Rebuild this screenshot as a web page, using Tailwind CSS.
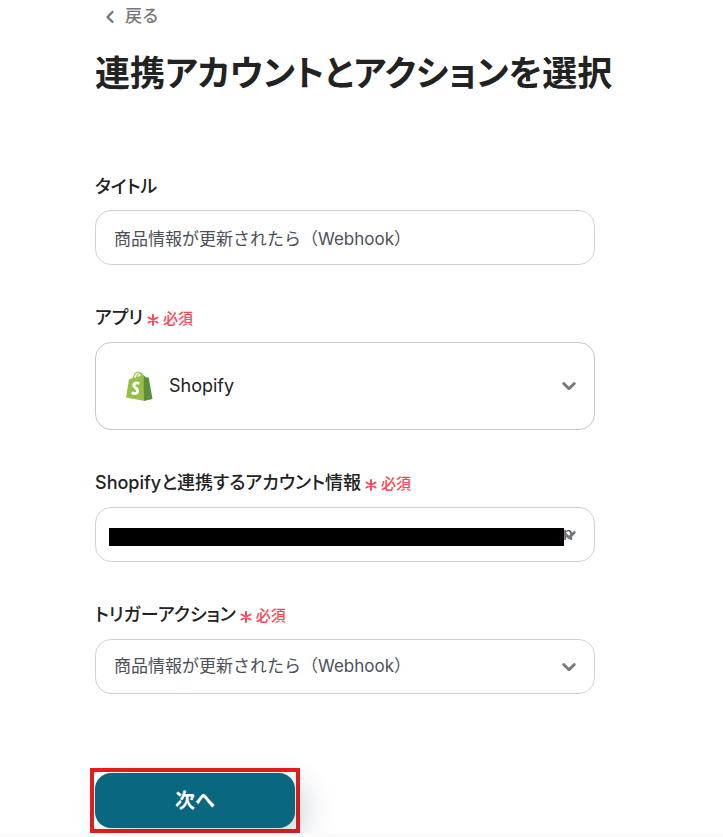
<!DOCTYPE html>
<html lang="ja">
<head>
    <meta charset="UTF-8">
    <meta name="viewport" content="width=device-width, initial-scale=1.0">
    <title>連携アカウントとアクションを選択</title>
    <script src="https://cdn.jsdelivr.net/npm/@tailwindcss/browser@4"></script>
</head>
<body class="bg-[#fbfbfb] text-[#222] font-['Inter','Noto_Sans_CJK_JP',sans-serif] overflow-x-hidden">
<main class="bg-white px-[95px] pt-[5px] overflow-hidden">
    <!-- 戻る -->
    <a href="#" class="flex w-fit items-center gap-2 pl-2 h-6 text-[17px] font-medium text-[#777]">
        <svg class="w-[14px] h-[14px]" viewBox="0 0 14 14" fill="none" stroke="currentColor" stroke-width="2.400" stroke-linecap="round" stroke-linejoin="round" aria-hidden="true"><path d="M9.500 2 4.500 7 9.500 12"/></svg>
        戻る
    </a>

    <h1 class="mt-[18px] h-[52px] text-[35px] leading-[52px] font-bold whitespace-nowrap [font-feature-settings:'palt']">連携アカウントとアクションを選択</h1>

    <form class="mt-[75px] max-w-[500px]">
        <div class="flex flex-col gap-[41px]">
            <!-- タイトル -->
            <div class="flex flex-col gap-3">
                <label for="title" class="h-6 text-[18px] leading-[26px] font-medium [font-feature-settings:'palt']">タイトル</label>
                <input type="text" id="title" name="title" value="商品情報が更新されたら（Webhook）" class="w-full h-[55px] px-[18px] border border-[#cdd2da] rounded-2xl text-[17px] text-[#4b5058]">
            </div>

            <!-- アプリ -->
            <div class="flex flex-col gap-3">
                <label for="app" class="flex items-center gap-1 h-6 text-[18px] leading-6 font-medium [font-feature-settings:'palt']">
                    アプリ
                    <span class="flex items-center gap-1 pt-[2px] text-[15px] text-[#ff4757]">
                        <svg class="w-3 h-3 mt-[2px]" viewBox="0 0 12 12" stroke="currentColor" stroke-width="2" stroke-linecap="round" aria-hidden="true"><path d="M6 1v10M1.500 3.500l9 5M10.500 3.500l-9 5"/></svg>
                        必須
                    </span>
                </label>
                <div class="relative">
                    <select id="app" name="app" class="appearance-none w-full h-[88px] pl-[73px] pr-12 pb-[2px] border border-[#c8c8c8] rounded-2xl text-[18px]">
                        <option>Shopify</option>
                    </select>
                    <svg class="absolute left-[31px] top-[29px] w-[27px] h-[30px] pointer-events-none" viewBox="0 0 27 30" aria-hidden="true">
                        <path d="M7 8C8 3.500 10.500 1 12.500 1c2 0 3 2.500 3 6M10.500 7c.5-3 2.500-5 4-5 1.500 0 2.200 2 2.200 4.500" fill="none" stroke="#95bf47" stroke-width="1.200"/>
                        <path d="M3 8.300 17.500 4l1.500 26L0 26.500z" fill="#95bf47"/>
                        <path d="M17.500 4l2.200 2.200 3 .3L26.500 28l-8.500 2z" fill="#5e8e3e"/>
                        <path d="M13.200 12.500c-4.400-2-6.700 1.500-4.300 3.700 1.600 1.400 3.300 2.200 2.700 4.500-.6 2.200-3.200 2.500-5.800.8" fill="none" stroke="#fff" stroke-width="2.900"/>
                    </svg>
                    <svg class="absolute right-[18px] top-[36px] w-4 h-4 text-[#777] pointer-events-none" viewBox="0 0 16 16" fill="none" stroke="currentColor" stroke-width="2.800" stroke-linecap="round" stroke-linejoin="round" aria-hidden="true"><path d="M2.700 5.500 8 10.800l5.300-5.300"/></svg>
                </div>
            </div>

            <!-- アカウント情報 -->
            <div class="flex flex-col gap-3">
                <label for="account" class="flex items-center gap-1 h-6 text-[18px] leading-6 font-medium [font-feature-settings:'palt']">
                    Shopifyと連携するアカウント情報
                    <span class="flex items-center gap-1 pt-[2px] text-[15px] text-[#ff4757]">
                        <svg class="w-3 h-3 mt-[2px]" viewBox="0 0 12 12" stroke="currentColor" stroke-width="2" stroke-linecap="round" aria-hidden="true"><path d="M6 1v10M1.500 3.500l9 5M10.500 3.500l-9 5"/></svg>
                        必須
                    </span>
                </label>
                <div class="relative">
                    <select id="account" name="account" class="appearance-none w-full h-[55px] pl-[18px] pr-[21px] border border-[#cdd2da] rounded-2xl text-[17px] text-[#4b5058] text-right">
                        <option>n</option>
                    </select>
                    <svg class="absolute right-[18px] top-5 w-4 h-4 text-[#777] pointer-events-none" viewBox="0 0 16 16" fill="none" stroke="currentColor" stroke-width="2.800" stroke-linecap="round" stroke-linejoin="round" aria-hidden="true"><path d="M2.700 5.500 8 10.800l5.300-5.300"/></svg>
                    <!-- 黒塗り -->
                    <span class="absolute left-[14px] right-[31px] top-[21px] h-[18px] bg-black pointer-events-none"></span>
                </div>
            </div>

            <!-- トリガーアクション -->
            <div class="flex flex-col gap-3">
                <label for="trigger" class="flex items-center gap-1 h-6 text-[18px] leading-6 font-medium [font-feature-settings:'palt']">
                    トリガーアクション
                    <span class="flex items-center gap-1 pt-[2px] text-[15px] text-[#ff4757]">
                        <svg class="w-3 h-3 mt-[2px]" viewBox="0 0 12 12" stroke="currentColor" stroke-width="2" stroke-linecap="round" aria-hidden="true"><path d="M6 1v10M1.500 3.500l9 5M10.500 3.500l-9 5"/></svg>
                        必須
                    </span>
                </label>
                <div class="relative">
                    <select id="trigger" name="trigger" class="appearance-none w-full h-[55px] pl-[18px] pr-12 border border-[#cdd2da] rounded-2xl text-[17px] text-[#4b5058]">
                        <option>商品情報が更新されたら（Webhook）</option>
                    </select>
                    <svg class="absolute right-[18px] top-5 w-4 h-4 text-[#777] pointer-events-none" viewBox="0 0 16 16" fill="none" stroke="currentColor" stroke-width="2.800" stroke-linecap="round" stroke-linejoin="round" aria-hidden="true"><path d="M2.700 5.500 8 10.800l5.300-5.300"/></svg>
                </div>
            </div>
        </div>

        <!-- 次へ -->
        <div class="mt-[74px] -ml-[5px] w-fit border-4 border-[#e91c1c] p-px">
            <button type="submit" class="block w-[200px] h-[55px] rounded-2xl bg-[#0a6780] text-[20px] font-bold text-white shadow-[10px_10px_30px_rgba(20,40,60,0.2)]">次へ</button>
        </div>
    </form>
</main>
</body>
</html>
